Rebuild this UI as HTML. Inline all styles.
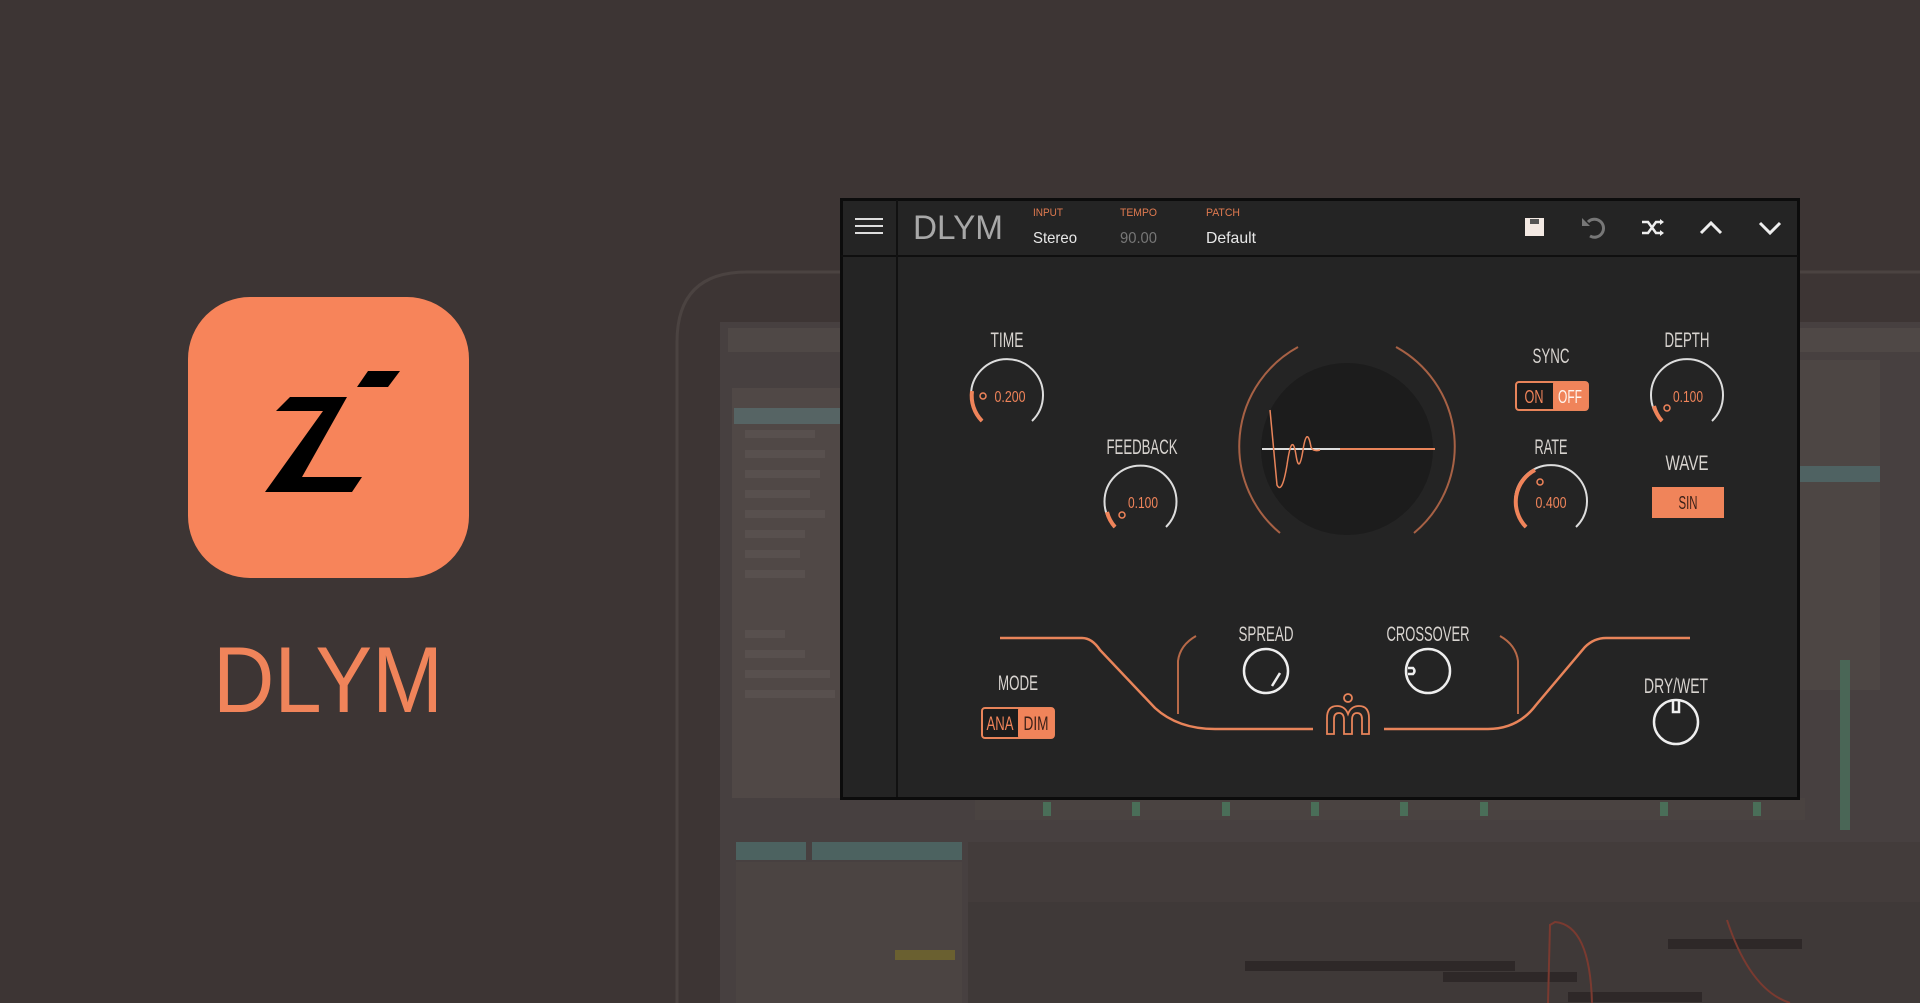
<!DOCTYPE html>
<html><head><meta charset="utf-8"><style>
html,body{margin:0;padding:0;background:#3d3534;width:1920px;height:1003px;overflow:hidden}
svg{display:block}
.lbl{font-family:"Liberation Sans",sans-serif;fill:#d8d4d0;font-size:21px;text-anchor:middle}
.val{font-family:"Liberation Sans",sans-serif;fill:#f0845a;font-size:16px;text-anchor:middle}
</style></head><body>
<svg width="1920" height="1003" viewBox="0 0 1920 1003" xmlns="http://www.w3.org/2000/svg">
<defs>
<linearGradient id="fadeL" x1="0" x2="1"><stop offset="0" stop-color="#e8845a" stop-opacity="0"/><stop offset="1" stop-color="#e8845a"/></linearGradient>
<linearGradient id="fadeR" x1="1" x2="0"><stop offset="0" stop-color="#e8845a" stop-opacity="0"/><stop offset="1" stop-color="#e8845a"/></linearGradient>
</defs>
<!-- faded Ableton background -->
<path d="M677 1003 L677 342 Q677 272 747 272 L1920 272" fill="none" stroke="#4b4341" stroke-width="3"/>
<rect x="720" y="322" width="1200" height="681" fill="#474040"/>
<rect x="728" y="328" width="1192" height="24" fill="#4f4846"/>
<rect x="732" y="388" width="240" height="410" fill="#504846"/>
<rect x="734" y="408" width="110" height="16" fill="#566464"/>
<g fill="#58504e">
<rect x="745" y="430" width="70" height="8"/><rect x="745" y="450" width="80" height="8"/><rect x="745" y="470" width="75" height="8"/><rect x="745" y="490" width="65" height="8"/><rect x="745" y="510" width="80" height="8"/><rect x="745" y="530" width="60" height="8"/><rect x="745" y="550" width="55" height="8"/><rect x="745" y="570" width="60" height="8"/><rect x="745" y="630" width="40" height="8"/><rect x="745" y="650" width="60" height="8"/><rect x="745" y="670" width="85" height="8"/><rect x="745" y="690" width="90" height="8"/>
</g>
<rect x="1800" y="360" width="80" height="330" fill="#4d4644"/>
<rect x="1800" y="466" width="80" height="16" fill="#4f6262"/>
<rect x="1840" y="660" width="10" height="170" fill="#4a6656"/>
<rect x="975" y="798" width="830" height="22" fill="#4a4341"/>
<g fill="#4a6e58"><rect x="1043" y="802" width="8" height="14"/><rect x="1132" y="802" width="8" height="14"/><rect x="1222" y="802" width="8" height="14"/><rect x="1311" y="802" width="8" height="14"/><rect x="1400" y="802" width="8" height="14"/><rect x="1480" y="802" width="8" height="14"/><rect x="1660" y="802" width="8" height="14"/><rect x="1753" y="802" width="8" height="14"/></g>
<rect x="736" y="842" width="70" height="18" fill="#4c6260"/>
<rect x="812" y="842" width="150" height="18" fill="#4c6260"/>
<rect x="736" y="862" width="226" height="141" fill="#4b4442"/>
<rect x="968" y="842" width="952" height="161" fill="#433c3b"/>
<rect x="968" y="902" width="952" height="101" fill="#3f3938"/>
<g fill="#2e2828"><rect x="1245" y="961" width="270" height="10"/><rect x="1443" y="972" width="134" height="10"/><rect x="1668" y="939" width="134" height="10"/><rect x="1568" y="992" width="134" height="10"/></g>
<path d="M1548 1003 L1550 925 L1555 922 Q1590 925 1592 1003 M1727 920 Q1750 990 1790 1003" fill="none" stroke="#7a3a30" stroke-width="2"/>
<rect x="895" y="950" width="60" height="10" fill="#6a6030"/>

<!-- app icon -->
<rect x="188" y="297" width="281" height="281" rx="62" fill="#f7845a"/>
<polygon fill="#000" points="290,397 347,397 302,477 362,477 352,492 265,492 323,411 276,411"/>
<polygon fill="#000" points="368,371 400,371 388,387 357,387"/>
<text x="328" y="712" text-anchor="middle" font-family="Liberation Sans,sans-serif" font-size="94" fill="#f0845a" textLength="230" lengthAdjust="spacingAndGlyphs">DLYM</text>

<!-- plugin -->
<rect x="841.5" y="199.5" width="957" height="599" fill="#242424" stroke="#0c0c0c" stroke-width="3"/>
<line x1="841" y1="256" x2="1798" y2="256" stroke="#0f0f0f" stroke-width="2"/>
<line x1="897" y1="200" x2="897" y2="797" stroke="#111" stroke-width="2"/>
<g stroke="#ddd" stroke-width="2"><line x1="855" y1="219" x2="883" y2="219"/><line x1="855" y1="226" x2="883" y2="226"/><line x1="855" y1="233" x2="883" y2="233"/></g>
<text x="913" y="239" font-family="Liberation Sans,sans-serif" font-size="34" fill="#a8a8a8" textLength="90" lengthAdjust="spacingAndGlyphs">DLYM</text>
<g font-family="Liberation Sans,sans-serif" font-size="11" fill="#e07a50">
<text x="1033" y="216" textLength="30" lengthAdjust="spacingAndGlyphs">INPUT</text><text x="1120" y="216" textLength="37" lengthAdjust="spacingAndGlyphs">TEMPO</text><text x="1206" y="216" textLength="34" lengthAdjust="spacingAndGlyphs">PATCH</text></g>
<g font-family="Liberation Sans,sans-serif" font-size="16">
<text x="1033" y="243" fill="#e8e8e8" textLength="44" lengthAdjust="spacingAndGlyphs">Stereo</text><text x="1120" y="243" fill="#777" textLength="37" lengthAdjust="spacingAndGlyphs">90.00</text><text x="1206" y="243" fill="#e8e8e8" textLength="50" lengthAdjust="spacingAndGlyphs">Default</text></g>
<!-- header icons -->
<rect x="1525" y="218" width="19" height="18" fill="#f3e9e3"/><rect x="1530" y="219" width="9" height="5" fill="#555"/>
<path d="M1588 222 A9 9 0 1 1 1590 236" fill="none" stroke="#777" stroke-width="3"/><path d="M1582 218 L1582 226 L1590 226 Z" fill="#777"/>
<path d="M1642 222 L1648 222 L1656 233 L1662 233 M1642 233 L1648 233 L1656 222 L1662 222" fill="none" stroke="#eee" stroke-width="2.5"/>
<path d="M1660 219 L1664 222 L1660 225 Z M1660 230 L1664 233 L1660 236 Z" fill="#eee"/>
<path d="M1701 233 L1711 223 L1721 233" fill="none" stroke="#eee" stroke-width="3"/>
<path d="M1760 223 L1770 233 L1780 223" fill="none" stroke="#eee" stroke-width="3"/>

<!-- center ring -->
<circle cx="1347" cy="449" r="86" fill="#1c1c1c"/>
<path d="M1280 533 A113 113 0 0 1 1298 347" fill="none" stroke="#c8714d" stroke-width="2" opacity="0.8"/>
<path d="M1396 347 A113 113 0 0 1 1414 533" fill="none" stroke="#c8714d" stroke-width="2" opacity="0.8"/>
<line x1="1262" y1="449" x2="1435" y2="449" stroke="#ddd" stroke-width="2"/>
<line x1="1340" y1="449" x2="1435" y2="449" stroke="#e8845a" stroke-width="2"/>
<path d="M1270 410 L1277 485 Q1282 495 1287 465 Q1292 430 1296 455 Q1299 475 1303 450 Q1307 425 1311 447 Q1313 452 1320 450" fill="none" stroke="#e8845a" stroke-width="1.5"/>

<!-- knobs -->
<g fill="none" stroke-width="2">
<path d="M982 421 A36 36 0 1 1 1032 421" stroke="#ddd"/>
<path d="M982 421 A36 36 0 0 1 972 391" stroke="#f0845a" stroke-width="4"/>
<path d="M1115 527 A36 36 0 1 1 1166 527" stroke="#ddd"/>
<path d="M1115 527 A36 36 0 0 1 1107 512" stroke="#f0845a" stroke-width="4"/>
<path d="M1662 421 A36 36 0 1 1 1712 421" stroke="#ddd"/>
<path d="M1662 421 A36 36 0 0 1 1654 406" stroke="#f0845a" stroke-width="4"/>
<path d="M1526 527 A36 36 0 1 1 1576 527" stroke="#ddd"/>
<path d="M1526 527 A36 36 0 0 1 1535 470" stroke="#f0845a" stroke-width="4"/>
<circle cx="983" cy="396" r="3" stroke="#f0845a" stroke-width="1.5"/>
<circle cx="1122" cy="515" r="3" stroke="#f0845a" stroke-width="1.5"/>
<circle cx="1667" cy="408" r="3" stroke="#f0845a" stroke-width="1.5"/>
<circle cx="1540" cy="482" r="3" stroke="#f0845a" stroke-width="1.5"/>
</g>
<text class="val" x="1010" y="402" textLength="31" lengthAdjust="spacingAndGlyphs">0.200</text>
<text class="val" x="1143" y="508" textLength="30" lengthAdjust="spacingAndGlyphs">0.100</text>
<text class="val" x="1688" y="402" textLength="30" lengthAdjust="spacingAndGlyphs">0.100</text>
<text class="val" x="1551" y="508" textLength="31" lengthAdjust="spacingAndGlyphs">0.400</text>
<text class="lbl" x="1007" y="347" textLength="33" lengthAdjust="spacingAndGlyphs">TIME</text>
<text class="lbl" x="1142" y="454" textLength="71" lengthAdjust="spacingAndGlyphs">FEEDBACK</text>
<text class="lbl" x="1551" y="363" textLength="37" lengthAdjust="spacingAndGlyphs">SYNC</text>
<text class="lbl" x="1687" y="347" textLength="45" lengthAdjust="spacingAndGlyphs">DEPTH</text>
<text class="lbl" x="1551" y="454" textLength="33" lengthAdjust="spacingAndGlyphs">RATE</text>
<text class="lbl" x="1687" y="470" textLength="43" lengthAdjust="spacingAndGlyphs">WAVE</text>
<!-- sync toggle -->
<rect x="1516" y="382" width="72" height="28" rx="3" fill="#1c1c1c" stroke="#e8845a" stroke-width="2"/>
<rect x="1553" y="382" width="35" height="28" rx="2" fill="#f0845a"/>
<text class="val" x="1534" y="403" style="font-size:18px" textLength="19" lengthAdjust="spacingAndGlyphs">ON</text>
<text x="1570" y="403" text-anchor="middle" font-family="Liberation Sans,sans-serif" font-size="18" fill="#fff5ee" textLength="24" lengthAdjust="spacingAndGlyphs">OFF</text>
<rect x="1652" y="487" width="72" height="31" fill="#f0845a"/>
<text x="1688" y="509" text-anchor="middle" font-family="Liberation Sans,sans-serif" font-size="18" fill="#3a2018" textLength="19" lengthAdjust="spacingAndGlyphs">SIN</text>

<!-- bottom curve -->
<path d="M967 638 L1000 638" stroke="url(#fadeL)" stroke-width="2.5" fill="none"/>
<path d="M1000 638 L1082 638 Q1092 638 1100 650 L1155 708 Q1178 729 1215 729 L1313 729" stroke="#e8845a" stroke-width="2.5" fill="none"/>
<path d="M1384 729 L1488 729 Q1518 729 1536 705 L1585 647 Q1594 638 1606 638 L1690 638" stroke="#e8845a" stroke-width="2.5" fill="none"/>
<path d="M1690 638 L1727 638" stroke="url(#fadeR)" stroke-width="2.5" fill="none"/>
<path d="M1178 714 L1178 661 Q1180 645 1196 636" stroke="#c8714d" stroke-width="2" fill="none" opacity="0.9"/>
<path d="M1518 714 L1518 661 Q1516 645 1500 636" stroke="#c8714d" stroke-width="2" fill="none" opacity="0.9"/>
<!-- M logo -->
<g fill="none" stroke="#e8845a" stroke-width="1.8">
<circle cx="1348" cy="698" r="4"/>
<path d="M1327 734 L1327 718 Q1327 706 1337 706 Q1345 706 1348 714 Q1351 706 1359 706 Q1369 706 1369 718 L1369 734 L1362 734 L1362 719 Q1362 713 1357 713 Q1352 713 1352 720 L1352 734 L1344 734 L1344 720 Q1344 713 1339 713 Q1334 713 1334 719 L1334 734 Z"/>
</g>
<text class="lbl" x="1266" y="641" textLength="55" lengthAdjust="spacingAndGlyphs">SPREAD</text>
<text class="lbl" x="1428" y="641" textLength="83" lengthAdjust="spacingAndGlyphs">CROSSOVER</text>
<text class="lbl" x="1018" y="690" textLength="40" lengthAdjust="spacingAndGlyphs">MODE</text>
<text class="lbl" x="1676" y="693" textLength="64" lengthAdjust="spacingAndGlyphs">DRY/WET</text>
<g fill="none" stroke="#eee" stroke-width="2.5">
<circle cx="1266" cy="671" r="22"/><path d="M1272 686 L1280 673"/>
<circle cx="1428" cy="671" r="22"/><path d="M1408 668 L1413 668 Q1416 671 1413 674 L1408 674"/>
<circle cx="1676" cy="722" r="22"/><path d="M1673 700 L1673 712 L1679 712 L1679 700"/>
</g>
<rect x="982" y="708" width="72" height="30" rx="3" fill="#1c1c1c" stroke="#e8845a" stroke-width="2"/>
<rect x="1018" y="708" width="36" height="30" rx="2" fill="#f0845a"/>
<text class="val" x="1000" y="730" style="font-size:19px" textLength="27" lengthAdjust="spacingAndGlyphs">ANA</text>
<text x="1036" y="730" text-anchor="middle" font-family="Liberation Sans,sans-serif" font-size="19" fill="#3a2018" textLength="25" lengthAdjust="spacingAndGlyphs">DIM</text>
</svg>
</body></html>
